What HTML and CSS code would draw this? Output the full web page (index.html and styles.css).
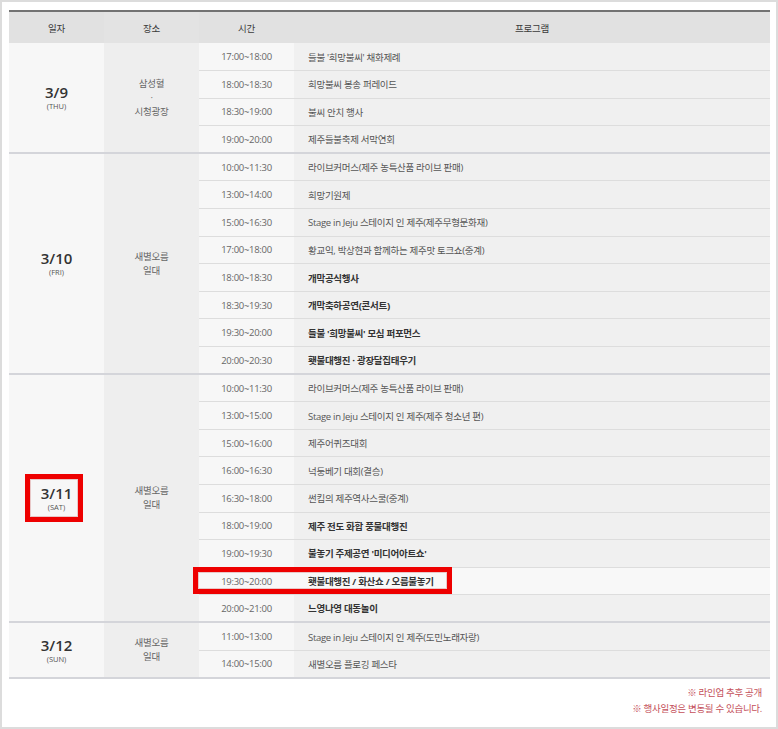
FILE: index.html
```html
<!DOCTYPE html>
<html lang="ko">
<head>
<meta charset="utf-8">
<title>제주들불축제 일정</title>
<link rel="stylesheet" href="styles.css">
</head>
<body>
<div class="frame">
  <table class="sched">
    <colgroup>
      <col class="c-date"><col class="c-place"><col class="c-time"><col class="c-prog">
    </colgroup>
    <thead>
      <tr><th class="h-date">일자</th><th class="h-place">장소</th><th class="h-time">시간</th><th class="h-prog">프로그램</th></tr>
    </thead>
    <tbody>
      <tr>
        <td class="date gl" rowspan="4"><div class="d">3/9</div><div class="w">(THU)</div></td>
        <td class="place gl" rowspan="4">삼성혈<br>·<br>시청광장</td>
        <td class="time">17:00~18:00</td><td class="prog">들불 '희망불씨' 채화제례</td>
      </tr>
      <tr><td class="time">18:00~18:30</td><td class="prog">희망불씨 봉송 퍼레이드</td></tr>
      <tr><td class="time">18:30~19:00</td><td class="prog">불씨 안치 행사</td></tr>
      <tr><td class="time gl">19:00~20:00</td><td class="prog gl">제주들불축제 서막연회</td></tr>

      <tr>
        <td class="date gl" rowspan="8"><div class="d">3/10</div><div class="w">(FRI)</div></td>
        <td class="place gl" rowspan="8">새별오름<br>일대</td>
        <td class="time">10:00~11:30</td><td class="prog">라이브커머스(제주 농특산품 라이브 판매)</td>
      </tr>
      <tr><td class="time">13:00~14:00</td><td class="prog">희망기원제</td></tr>
      <tr><td class="time">15:00~16:30</td><td class="prog">Stage in Jeju 스테이지 인 제주(제주무형문화재)</td></tr>
      <tr><td class="time">17:00~18:00</td><td class="prog">황교익, 박상현과 함께하는 제주맛 토크쇼(중계)</td></tr>
      <tr><td class="time">18:00~18:30</td><td class="prog b">개막공식행사</td></tr>
      <tr><td class="time">18:30~19:30</td><td class="prog b">개막축하공연(콘서트)</td></tr>
      <tr><td class="time">19:30~20:00</td><td class="prog b">들불 '희망불씨' 모심 퍼포먼스</td></tr>
      <tr><td class="time gl">20:00~20:30</td><td class="prog b gl">횃불대행진 · 광장달집태우기</td></tr>

      <tr>
        <td class="date gl" rowspan="9"><div class="d">3/11</div><div class="w">(SAT)</div></td>
        <td class="place gl" rowspan="9">새별오름<br>일대</td>
        <td class="time">10:00~11:30</td><td class="prog">라이브커머스(제주 농특산품 라이브 판매)</td>
      </tr>
      <tr><td class="time">13:00~15:00</td><td class="prog">Stage in Jeju 스테이지 인 제주(제주 청소년 편)</td></tr>
      <tr><td class="time">15:00~16:00</td><td class="prog">제주어퀴즈대회</td></tr>
      <tr><td class="time">16:00~16:30</td><td class="prog">넉둥베기 대회(결승)</td></tr>
      <tr><td class="time">16:30~18:00</td><td class="prog">썬킴의 제주역사스쿨(중계)</td></tr>
      <tr><td class="time">18:00~19:00</td><td class="prog b">제주 전도 화합 풍물대행진</td></tr>
      <tr><td class="time">19:00~19:30</td><td class="prog b">불놓기 주제공연 '미디어아트쇼'</td></tr>
      <tr class="hl"><td class="time">19:30~20:00</td><td class="prog b">횃불대행진 / 화산쇼 / 오름불놓기</td></tr>
      <tr><td class="time gl">20:00~21:00</td><td class="prog b gl">느영나영 대동놀이</td></tr>

      <tr>
        <td class="date gl" rowspan="2"><div class="d">3/12</div><div class="w">(SUN)</div></td>
        <td class="place gl" rowspan="2">새별오름<br>일대</td>
        <td class="time">11:00~13:00</td><td class="prog">Stage in Jeju 스테이지 인 제주(도민노래자랑)</td>
      </tr>
      <tr><td class="time gl">14:00~15:00</td><td class="prog gl">새별오름 플로깅 페스타</td></tr>
    </tbody>
  </table>
  <div class="notes">
    <p>※ 라인업 추후 공개</p>
    <p>※ 행사일정은 변동될 수 있습니다.</p>
  </div>
  <div class="mark mark-date"></div>
  <div class="mark mark-row"></div>
</div>
</body>
</html>
```

FILE: styles.css
```css
* { box-sizing: border-box; }
html, body { margin: 0; padding: 0; background: #fff; }
body {
  font-family: "Open Sans", "Noto Sans CJK KR", sans-serif;
  color: #555;
}
.frame {
  position: relative;
  width: 778px;
  height: 729px;
  border: 2px solid #dcdcdc;
  padding: 8px 6px 0 7px;
}
.sched {
  width: 761px;
  border-collapse: collapse;
  table-layout: fixed;
  border-top: 2px solid #727272;
}
.c-date, .c-place, .c-time { width: 95px; }
.sched th {
  height: 32px;
  padding: 0;
  font-size: 9.5px;
  font-weight: normal;
  color: #3a3a3a;
  letter-spacing: -0.3px;
  background: #e1e1e1;
}
.sched th.h-place { background: #e3e3e3; }
.sched td {
  height: 27.6px;
  padding: 0;
  font-size: 9.5px;
  letter-spacing: -0.3px;
}
.date {
  background: #f7f7f7;
  text-align: center;
  vertical-align: middle;
  color: #333;
}
.date .d {
  font-size: 15px;
  font-weight: 600;
  letter-spacing: 0;
  line-height: 17px;
}
.date .w {
  font-size: 7.5px;
  line-height: 10px;
  color: #555;
  letter-spacing: 0;
}
.place {
  background: #eeeeee;
  text-align: center;
  vertical-align: middle;
  line-height: 14px;
  color: #666;
}
.time {
  background: #f7f7f7;
  text-align: center;
  color: #666;
  border-bottom: 1px solid #dddddd;
}
.prog {
  background: #f0f0f0;
  padding-left: 14px !important;
  color: #555;
  border-bottom: 1px solid #dddddd;
}
.prog.b { font-weight: 700; color: #333; }
.sched td.gl { border-bottom: 2px solid #d4d5da; }
.hl .time, .hl .prog { background: #f8f8f8; }
.notes {
  margin-top: 6px;
  padding-right: 8px;
  text-align: right;
  font-size: 9.5px;
  letter-spacing: -0.3px;
  color: #c4505a;
}
.notes p { margin: 0; line-height: 16px; }
.mark {
  position: absolute;
  border: 5px solid #ee0000;
  box-shadow: inset 0 0 0 1px #e8c8c8;
}
.mark-date { left: 23px; top: 472px; width: 58px; height: 48px; }
.mark-row { left: 191px; top: 565px; width: 259px; height: 27px; }
```
